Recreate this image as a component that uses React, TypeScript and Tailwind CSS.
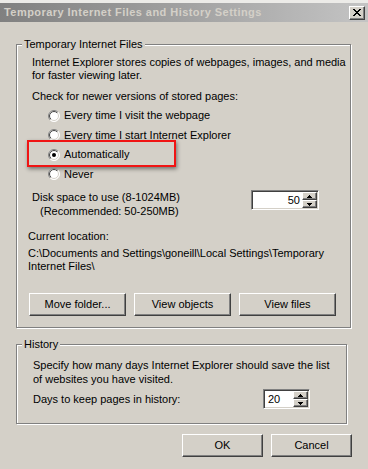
import React from "react";

const raised =
  "border border-t-white border-l-white border-r-[#404040] border-b-[#404040] shadow-[inset_-1px_-1px_0_#808080] bg-[#d4d0c8]";
const sunken =
  "border border-t-[#808080] border-l-[#808080] border-r-white border-b-white shadow-[inset_1px_1px_0_#404040,inset_-1px_-1px_0_#d4d0c8] bg-white p-[1px]";
const groupBox =
  "min-w-0 border border-[#808080] shadow-[inset_1px_1px_0_#ffffff,1px_1px_0_#ffffff] pl-[5px]";

function Radio({ checked }: { checked?: boolean }) {
  return (
    <svg width="12" height="12" viewBox="0 0 12 12" className="shrink-0">
      <defs>
        <linearGradient id="rOuter" x1="0" y1="0" x2="1" y2="1">
          <stop offset="0.5" stopColor="#808080" />
          <stop offset="0.5" stopColor="#ffffff" />
        </linearGradient>
        <linearGradient id="rInner" x1="0" y1="0" x2="1" y2="1">
          <stop offset="0.5" stopColor="#404040" />
          <stop offset="0.5" stopColor="#d4d0c8" />
        </linearGradient>
      </defs>
      <circle cx="6" cy="6" r="5.5" fill="#fff" stroke="url(#rOuter)" />
      <circle cx="6" cy="6" r="4.5" fill="#fff" stroke="url(#rInner)" />
      {checked && <circle cx="6" cy="6" r="2" fill="#000" />}
    </svg>
  );
}

function Arrow({ up }: { up?: boolean }) {
  return (
    <svg width="5" height="3" viewBox="0 0 5 3">
      <path
        d={up ? "M2 0h1v1h-1z M1 1h3v1h-3z M0 2h5v1h-5z" : "M0 0h5v1h-5z M1 1h3v1h-3z M2 2h1v1h-1z"}
        fill="#000"
      />
    </svg>
  );
}

function Spinner({ value, right }: { value: string; right?: boolean }) {
  return (
    <div className={`flex h-[20px] ${right ? "w-[68px]" : "w-[47px]"} ${sunken}`}>
      <div
        className={`flex flex-1 items-center ${right ? "justify-end pr-[2px]" : "justify-start pl-[3px]"}`}
      >
        {value}
      </div>
      <div className="flex w-[15px] flex-col">
        <div className={`flex flex-1 items-center justify-center ${raised}`}>
          <Arrow up />
        </div>
        <div className={`flex flex-1 items-center justify-center ${raised}`}>
          <Arrow />
        </div>
      </div>
    </div>
  );
}

function Button({ label, w }: { label: string; w: string }) {
  return (
    <button className={`flex h-[23px] items-center justify-center ${w} ${raised}`}>
      {label}
    </button>
  );
}

function RadioRow({ label, checked, h, mark }: { label: string; checked?: boolean; h: string; mark?: boolean }) {
  return (
    <div className={`relative flex items-center gap-[4px] pl-[20px] ${h}`}>
      {mark && (
        <div className="absolute left-[-1px] top-[-5px] h-[27px] w-[149px] border-2 border-[#f01414] shadow-[1px_2px_4px_rgba(0,0,0,0.45)]" />
      )}
      <Radio checked={checked} />
      <span>{label}</span>
    </div>
  );
}

export default function App() {
  return (
    <div className="flex h-[469px] w-[368px] flex-col overflow-hidden whitespace-nowrap bg-[#d4d0c8] font-['Liberation_Sans',Arial,sans-serif] text-[11px] leading-[13px] text-black">
      <div className="h-[3px] bg-[#ecebe8]" />
      <div className="flex h-[19px] items-center justify-between bg-linear-to-r from-[#808080] to-[#c4c4c4] pl-[4px] pr-[3px]">
        <span className="font-bold tracking-[0.45px] text-[#d4d0c8]">
          Temporary Internet Files and History Settings
        </span>
        <div className={`flex h-[14px] w-[16px] items-center justify-center ${raised}`}>
          <svg width="8" height="7" viewBox="0 0 8 7">
            <path
              d="M0 0h2v1h-2z M6 0h2v1h-2z M1 1h2v1h-2z M5 1h2v1h-2z M2 2h4v1h-4z M3 3h2v1h-2z M2 4h4v1h-4z M1 5h2v1h-2z M5 5h2v1h-2z M0 6h2v1h-2z M6 6h2v1h-2z"
              fill="#000"
            />
          </svg>
        </div>
      </div>

      <div className="flex flex-col px-[16px] pt-[16px]">
        <fieldset className={`w-[335px] pb-[11px] pt-[5px] ${groupBox}`}>
          <legend className="bg-[#d4d0c8] px-[2px] leading-[13px]">Temporary Internet Files</legend>
          <div className="flex flex-col pl-[6px]">
            <p className="ml-[4px]">
              Internet Explorer stores copies of webpages, images, and media
              <br />
              for faster viewing later.
            </p>
            <p className="ml-[4px] mt-[8px]">Check for newer versions of stored pages:</p>
            <div className="mt-[3px] flex flex-col">
              <RadioRow label="Every time I visit the webpage" h="h-[19px]" />
              <RadioRow label="Every time I start Internet Explorer" h="h-[20px]" />
              <RadioRow label="Automatically" checked mark h="h-[19px]" />
              <RadioRow label="Never" h="h-[20px]" />
            </div>
            <div className="mt-[6px] flex">
              <div className="ml-[4px] w-[219px] leading-[14px]">
                <div>Disk space to use (8-1024MB)</div>
                <div className="ml-[8px]">(Recommended: 50-250MB)</div>
              </div>
              <Spinner value="50" right />
            </div>
            <p className="mt-[12px]">Current location:</p>
            <p className="mt-[4px]">
              C:\Documents and Settings\goneill\Local Settings\Temporary
              <br />
              Internet Files\
            </p>
            <div className="ml-[1px] mt-[20px] flex gap-[8px]">
              <Button label="Move folder..." w="w-[97px]" />
              <Button label="View objects" w="w-[97px]" />
              <Button label="View files" w="w-[97px]" />
            </div>
          </div>
        </fieldset>

        <fieldset className={`mt-[10px] w-[331px] pb-[14px] pt-[7px] ${groupBox}`}>
          <legend className="bg-[#d4d0c8] px-[2px] leading-[13px]">History</legend>
          <div className="flex flex-col pl-[11px]">
            <p className="leading-[14px]">
              Specify how many days Internet Explorer should save the list
              <br />
              of websites you have visited.
            </p>
            <div className="mt-[3px] flex items-center">
              <span className="w-[230px]">Days to keep pages in history:</span>
              <Spinner value="20" />
            </div>
          </div>
        </fieldset>

        <div className="mt-[10px] flex justify-end gap-[8px]">
          <Button label="OK" w="w-[81px]" />
          <Button label="Cancel" w="w-[81px]" />
        </div>
      </div>
    </div>
  );
}
